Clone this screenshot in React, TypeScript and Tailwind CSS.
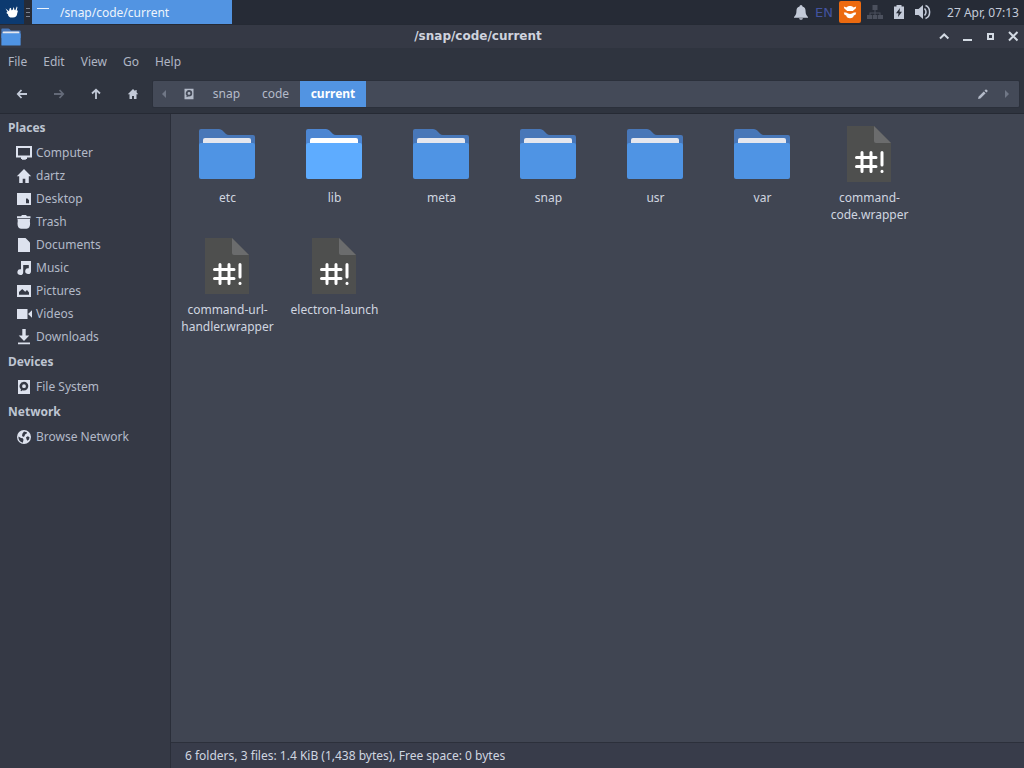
import type { ReactNode } from "react";

interface IconProps {
  children: ReactNode;
  className?: string;
  box?: string;
}

function Icon({ children, className = "size-4", box = "0 0 16 16" }: IconProps) {
  return (
    <svg viewBox={box} className={`shrink-0 ${className}`} fill="currentColor" fillRule="evenodd" aria-hidden="true">
      {children}
    </svg>
  );
}

const HOME = <path d="M8 1 .8 8.2h2.4V15h3.5v-4.2h2.6V15h3.5V8.2h2.4L13 6.1V2.5h-1.8v1.7z" />;
const DISK = (
  <path d="M2 1h12v14H2zM8 2.800a4.300 4.300 0 0 1 0 8.600q-.8 0-1.500-.2L5.300 12.300 4.500 11.500l.5-1.200A4.300 4.300 0 0 1 8 2.800zM8 5.300a1.900 1.900 0 1 0 0 3.800 1.900 1.900 0 1 0 0-3.800z" />
);

const SECTIONS: Array<{ title: string; items: Array<{ label: string; icon: ReactNode }> }> = [
  {
    title: "Places",
    items: [
      { label: "Computer", icon: <path d="M0 1h16v11.500h-5V14H9.800v.8H6V14H5v-1.500H0zM2 3v7.500h12V3z" /> },
      { label: "dartz", icon: <path d="M8 1 .8 8.200h2.400V15h3.500v-4.200h2.600V15h3.500V8.200h2.400z" /> },
      { label: "Desktop", icon: <path d="M1 2h14v12H1zM10 7.500v4.800h3V9.300L11.500 7.500z" /> },
      {
        label: "Trash",
        icon: <path d="M1 2.300h4L6 1h4l1 1.300h3.500v1.900H1zM1.500 5h12.600q-.5 2 0 4.500c0 3-1 5.200-3.500 5.200H5c-2.500 0-3.500-2.200-3.500-5.200Q2 7 1.500 5z" />,
      },
      { label: "Documents", icon: <path d="M2 1h7.500L14 5.500V15H2z" /> },
      {
        label: "Music",
        icon: <path d="M5 1h10v10.200a2.900 2.900 0 1 1-2.200-2.900V5H7.200v7.200A2.900 2.900 0 1 1 5 9.300z" />,
      },
      { label: "Pictures", icon: <path d="M1 2h14v12H1zM3 11.800h10V9.500L11 7 9.200 8.800 6.200 6 3 9z" /> },
      { label: "Videos", icon: <path d="M1 3h10.500v10H1zM12 8l4-3.800v7.600z" /> },
      { label: "Downloads", icon: <path d="M6.300 0h3.400v6.500h3.600L8 12 2.700 6.500h3.600zM2 13.500h12v1.800H2z" /> },
    ],
  },
  { title: "Devices", items: [{ label: "File System", icon: DISK }] },
  {
    title: "Network",
    items: [
      {
        label: "Browse Network",
        icon: (
          <path d="M8 1a7 7 0 1 0 0 14A7 7 0 0 0 8 1zM2.500 7.500 5 9l1.800.3.700 1.400-.7 3C4 13 2.200 10.500 2.500 7.500zM8 2.600l3 .6-.5 1.600-1.500.7-.5 1.700-1.500.8-1-1.500.5-2zM10 8.200l1.800-.9 1.700.9-.5 2.300-1.500 1.300-1-1.500z" />
        ),
      },
    ],
  },
];

const FILES: Array<{ name: string; kind: "folder" | "active" | "script"; lines?: string[] }> = [
  { name: "etc", kind: "folder" },
  { name: "lib", kind: "active" },
  { name: "meta", kind: "folder" },
  { name: "snap", kind: "folder" },
  { name: "usr", kind: "folder" },
  { name: "var", kind: "folder" },
  { name: "command-code.wrapper", kind: "script", lines: ["command-", "code.wrapper"] },
  { name: "command-url-handler.wrapper", kind: "script", lines: ["command-url-", "handler.wrapper"] },
  { name: "electron-launch", kind: "script" },
];

function FolderIcon({ active, className = "size-16" }: { active?: boolean; className?: string }) {
  return (
    <svg viewBox="0 0 64 64" className={className} aria-hidden="true">
      <path d="M4 9q0-2 2-2h18q2 0 3.500 1.500L31 12q1 1 3 1h24q2 0 2 2v20H4z" fill={active ? "#4d86d2" : "#4877b8"} />
      <path d="M8 24v-6q0-2 2-2h44q2 0 2 2v6z" fill={active ? "#ffffff" : "#e5e7ee"} />
      <path d="M4 23q0-2 2-2h52q2 0 2 2v32q0 2-2 2H6q-2 0-2-2z" fill={active ? "#5eacff" : "#4f94e4"} />
    </svg>
  );
}

function ScriptIcon() {
  return (
    <svg viewBox="0 0 64 64" className="size-16" aria-hidden="true">
      <path d="M10 4h27l17 17v39H10z" fill="#4e4f4e" />
      <path d="M37 4l17 17H39q-2 0-2-2z" fill="#6b6c6d" />
      <g stroke="#ffffff" strokeWidth="3" strokeLinecap="round" fill="none">
        <path d="M25 30.500v19M34 30.500v19M19.500 35.500H39M19.500 44.500H39M45 30.500v12.500" />
        <path d="M45 49.300v.2" />
      </g>
    </svg>
  );
}

function TopPanel() {
  return (
    <header className="flex h-6 items-center bg-[#262b36] text-[#c3cad8]">
      <button aria-label="Applications" className="flex size-6 items-center justify-center bg-[#0c3a70] text-white">
        <Icon className="size-4">
          <path d="M1.500 4.500 4 6.500 5 7.200 5.600 4.500 7 3.800l.4 2.400L8.500 6l1.300-3 .7 3 .8.300 1.500-3.800.6.500-.6 3.800L14 6.500l-.8 3c-.2 2.600-1.700 4-4.200 4-3 .3-5-.8-5-3.300-1-.5-1.500-1-1.500-1.700l1-.5z" />
        </Icon>
      </button>
      <span className="flex w-2 flex-col items-end gap-[3px] pr-0.5" aria-hidden="true">
        <i className="h-px w-1 bg-[#7c8391]" />
        <i className="h-px w-1 bg-[#7c8391]" />
        <i className="h-px w-1 bg-[#7c8391]" />
      </span>
      <button className="flex h-6 w-[200px] items-center gap-2 bg-[#5294e2] pl-1 text-[#eef4fc]">
        <Icon className="size-4">
          <path d="M1 4h12v1H1z" />
        </Icon>
        /snap/code/current
      </button>
      <div className="ml-auto flex items-center gap-2 pr-[5px]">
        <div className="flex items-center gap-1.5">
          <button aria-label="Notifications">
            <Icon>
              <path d="M8 1q1.500 0 1.500 1.500C12 3.200 12.600 5 12.600 7.500c0 2.500.8 3.500 2.400 5.500v.8H1V13c1.600-2 2.400-3 2.400-5.500C3.400 5 4 3.200 6.500 2.500Q6.500 1 8 1zM6 14.300h4q-.5 1.500-2 1.500t-2-1.500z" />
            </Icon>
          </button>
          <button className="font-['DejaVu_Sans',sans-serif] text-[13px] text-[#4353a0]">EN</button>
          <button aria-label="Updates" className="flex size-[22px] items-center justify-center rounded-xs bg-[#ec6a10] text-white">
            <Icon className="size-[18px]">
              <path d="M2.500 3.200 4.800 4C6 2.200 10 2.200 11.200 4l2.300-.8q0 2-1.800 2.800L10.500 7h-5L4.300 6Q2.500 5.200 2.500 3.200z" />
              <path d="M2.500 8.500h2q3.500 2.400 7 0h2l-.6 2-1.500.500-.7 1.700q-2.700 1.800-5.400 0l-.7-1.700-1.500-.500z" />
            </Icon>
          </button>
          <button aria-label="Network" className="text-[#4b505d]">
            <Icon>
              <path d="M5.500 1h5v5h-5zM7.500 6h1v2.500h5V11h-1V9.500h-4V11h-1V9.500h-4V11h-1V8.500h5zM0 11h5v4H0zM5.700 11h4.600v4H5.700zM11 11h5v4h-5z" />
            </Icon>
          </button>
        </div>
        <button aria-label="Power">
          <Icon>
            <path d="M5.500 1h5v1.500H13V15H3V2.500h2.500zM9 4 5 9.300h2.500L7 13l4-5.300H8.500z" />
          </Icon>
        </button>
        <button aria-label="Volume">
          <Icon>
            <path d="M0 5h3.500L8 1v14l-4.500-4H0z" />
            <path d="M9.500 4.500q3 3.500 0 7M10.500 1.500c5.500 2 5.500 11 0 13" fill="none" stroke="currentColor" strokeWidth="1.500" />
          </Icon>
        </button>
        <span className="pl-2">27 Apr, 07:13</span>
      </div>
    </header>
  );
}

function TitleBar() {
  return (
    <div className="grid h-6 grid-cols-[1fr_auto_1fr] items-center border-t border-[#252a34] bg-[#353945]">
      <FolderIcon className="size-[22px]" />
      <h1 className="pr-17 font-['DejaVu_Sans',sans-serif] font-bold text-[#cfd3de]">/snap/code/current</h1>
      <div className="flex justify-end gap-[7px] pr-[3px] text-[#d3dae3]">
        <button aria-label="Roll up">
          <Icon>
            <path d="m4 9.500 4.200-4 4.200 4" fill="none" stroke="currentColor" strokeWidth="2" />
          </Icon>
        </button>
        <button aria-label="Minimize">
          <Icon>
            <path d="M4 10h9v2H4z" />
          </Icon>
        </button>
        <button aria-label="Maximize">
          <Icon>
            <path d="M5 4h7v7H5zM7 6v3h3V6z" />
          </Icon>
        </button>
        <button aria-label="Close">
          <Icon>
            <path d="m4 3 8.500 8.500M12.500 3 4 11.500" fill="none" stroke="currentColor" strokeWidth="2" />
          </Icon>
        </button>
      </div>
    </div>
  );
}

function Toolbar() {
  return (
    <div className="flex h-10 items-center border-b border-[#262a34] pr-1 text-[#c3cad8]">
      <div className="flex w-[152px] shrink-0 gap-[21px] pl-[14px]">
        <button aria-label="Back">
          <Icon>
            <path d="M7.500 4 3.800 8l3.700 4M4 8h9" fill="none" stroke="currentColor" strokeWidth="1.800" />
          </Icon>
        </button>
        <button aria-label="Forward" className="text-[#646a78]" disabled>
          <Icon>
            <path d="m8.500 4 3.700 4-3.700 4M12 8H3" fill="none" stroke="currentColor" strokeWidth="1.800" />
          </Icon>
        </button>
        <button aria-label="Up">
          <Icon>
            <path d="M4 7.500 8 3.800l4 3.700M8 4v9" fill="none" stroke="currentColor" strokeWidth="1.800" />
          </Icon>
        </button>
        <button aria-label="Home">
          <Icon box="-3 -3 22 22">{HOME}</Icon>
        </button>
      </div>
      <nav aria-label="Path" className="flex h-7 grow items-center rounded-xs border border-[#2b303b] bg-[#444a58] text-[#b4bbc9]">
        <button aria-label="Scroll left" className="w-[23px] pl-[7px] text-[#707786]">
          <Icon className="size-2" box="0 0 8 8">
            <path d="M6 0v8L2 4z" />
          </Icon>
        </button>
        <button aria-label="File System" className="flex w-[26px] justify-center">
          <Icon className="size-3">{DISK}</Icon>
        </button>
        <button className="w-[49px]">snap</button>
        <button className="w-[49px]">code</button>
        <button className="h-[26px] w-[66px] bg-[#5294e2] font-bold text-white" aria-current="page">
          current
        </button>
        <button aria-label="Edit path" className="ml-auto w-[26px]">
          <Icon className="size-3">
            <path d="M1.500 14.500l.5-3L9 4.500 11.500 7l-7 7zM10 3.500l1.500-1.500q1-.5 2 .500t.500 2L12.500 6z" />
          </Icon>
        </button>
        <button aria-label="Scroll right" className="w-4 text-[#707786]">
          <Icon className="size-2" box="0 0 8 8">
            <path d="M2 0v8l4-4z" />
          </Icon>
        </button>
      </nav>
    </div>
  );
}

function Sidebar() {
  return (
    <aside className="w-[171px] shrink-0 border-r border-[#2a2e39] bg-[#353945] text-[#b3bac8]">
      {SECTIONS.map((section) => (
        <section key={section.title}>
          <h2 className="h-[27px] pl-2 leading-[27px] font-bold text-[#bec5d2]">{section.title}</h2>
          {section.items.map((item) => (
            <button key={item.label} className="flex h-[23px] w-full items-center gap-1 pl-4">
              <Icon className="size-4 text-[#dde2ee]">{item.icon}</Icon>
              {item.label}
            </button>
          ))}
        </section>
      ))}
    </aside>
  );
}

export default function App() {
  return (
    <div className="flex min-h-screen flex-col bg-[#2f343f] font-['Noto_Sans',sans-serif] text-[12px] leading-[17px]">
      <TopPanel />
      <TitleBar />
      <nav aria-label="Menu" className="flex h-[26px] items-center gap-4 pl-2 text-[#b0b6c4]">
        {["File", "Edit", "View", "Go", "Help"].map((label) => (
          <button key={label}>{label}</button>
        ))}
      </nav>
      <Toolbar />
      <div className="flex grow">
        <Sidebar />
        <main className="flex grow flex-col bg-[#404552] text-[#d0d6e0]">
          <div className="grid grow auto-rows-[112px] grid-cols-[repeat(auto-fill,107px)] content-start pt-2 pl-[3px]">
            {FILES.map((file) => (
              <button key={file.name} className="flex flex-col items-center justify-start gap-[3px]">
                <span className="pr-px">
                  {file.kind === "script" ? <ScriptIcon /> : <FolderIcon active={file.kind === "active"} />}
                </span>
                <span>
                  {(file.lines ?? [file.name]).map((line) => (
                    <span key={line} className="block">
                      {line}
                    </span>
                  ))}
                </span>
              </button>
            ))}
          </div>
          <footer className="h-[26px] border-t border-[#2c303b] bg-[#383c4a] pl-[14px] leading-[25px]">
            6 folders, 3 files: 1.4 KiB (1,438 bytes), Free space: 0 bytes
          </footer>
        </main>
      </div>
    </div>
  );
}
